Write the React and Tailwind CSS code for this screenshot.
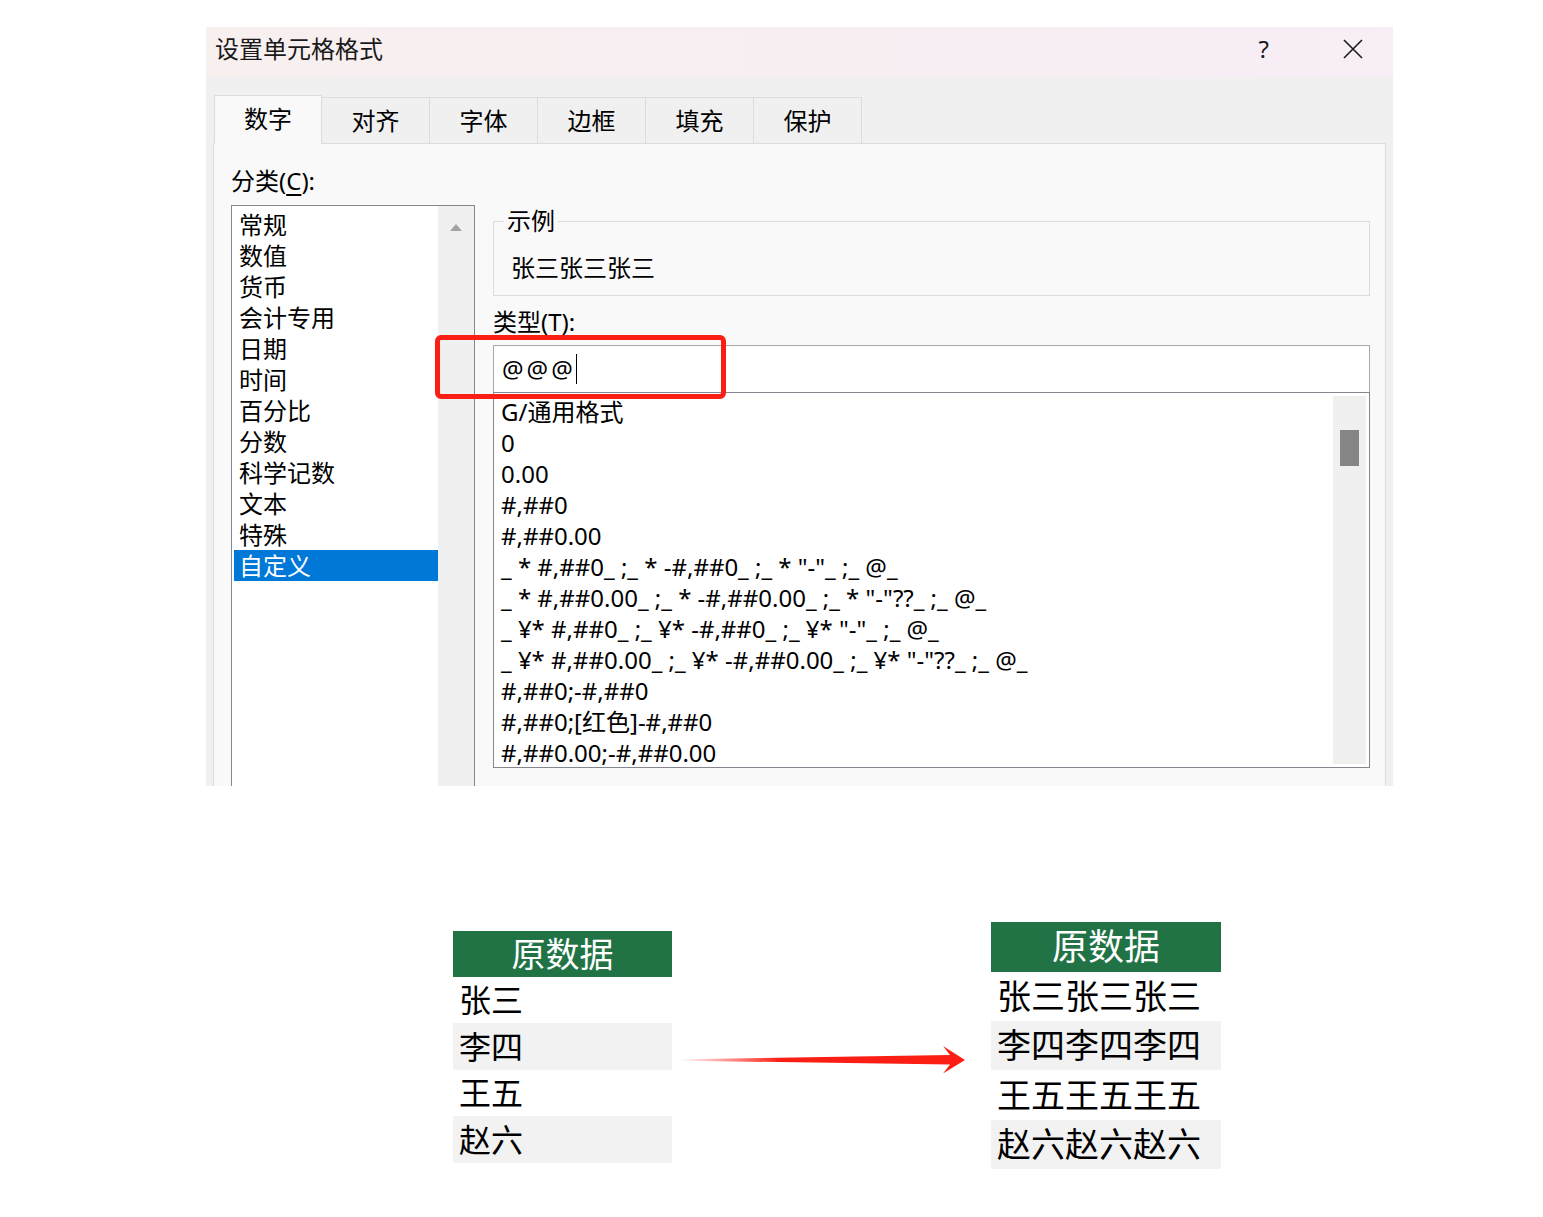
const FONT = { fontFamily: '"Noto Sans", "Noto Sans CJK SC", sans-serif' }

const tabs = ["数字", "对齐", "字体", "边框", "填充", "保护"]

const categories = ["常规", "数值", "货币", "会计专用", "日期", "时间", "百分比", "分数", "科学记数", "文本", "特殊", "自定义"]

const formats = [
  "G/通用格式",
  "0",
  "0.00",
  "#,##0",
  "#,##0.00",
  '_ * #,##0_ ;_ * -#,##0_ ;_ * "-"_ ;_ @_',
  '_ * #,##0.00_ ;_ * -#,##0.00_ ;_ * "-"??_ ;_ @_',
  '_ ¥* #,##0_ ;_ ¥* -#,##0_ ;_ ¥* "-"_ ;_ @_',
  '_ ¥* #,##0.00_ ;_ ¥* -#,##0.00_ ;_ ¥* "-"??_ ;_ @_',
  "#,##0;-#,##0",
  "#,##0;[红色]-#,##0",
  "#,##0.00;-#,##0.00",
]

const names = ["张三", "李四", "王五", "赵六"]

function TitleBar() {
  return (
    <div className="h-[50px] shrink-0 flex items-center pl-[9px] pr-[30px] pb-[6px] bg-gradient-to-r from-[#f8efef] to-[#f7eef6] text-[#1a1a1a]">
      <span className="text-[24px] leading-[30px]">设置单元格格式</span>
      <span className="ml-auto text-[24px] leading-[30px]">?</span>
      <svg className="ml-[74px]" width="20" height="20" viewBox="0 0 20 20">
        <path d="M1 1L19 19M19 1L1 19" stroke="#1a1a1a" strokeWidth="1.6" />
      </svg>
    </div>
  )
}

function Tabs() {
  return (
    <div className="h-[66px] shrink-0 pl-[8px] flex items-end relative z-10">
      {tabs.map((t, i) =>
        i === 0 ? (
          <div key={t} className="w-[108px] h-[49px] -mb-px pb-[2px] bg-[#f9f9f9] border border-b-0 border-[#dcdcdc] flex items-center justify-center text-[24px]">
            {t}
          </div>
        ) : (
          <div key={t} className="w-[108px] h-[46px] bg-[#f0f0f0] border border-l-0 border-b-0 border-[#dcdcdc] flex items-center justify-center text-[24px]">
            {t}
          </div>
        )
      )}
    </div>
  )
}

function CategoryList() {
  return (
    <div className="w-[244px]">
      <div className="h-[61px] flex items-center text-[24px] pt-[13px]">
        分类(<span className="underline underline-offset-4">C</span>):
      </div>
      <div className="h-[600px] border border-[#828790] flex bg-white">
        <div className="flex-1 pl-[2px] pt-[3px]">
          {categories.map((c, i) => (
            <div
              key={c}
              className={
                "h-[31px] leading-[31px] pl-[5px] text-[24px] " +
                (i === categories.length - 1 ? "bg-[#0078d7] text-white" : "text-black")
              }
            >
              {c}
            </div>
          ))}
        </div>
        <div className="w-[36px] bg-[#f0f0f0] flex justify-center pt-[18px]">
          <svg width="12" height="7" viewBox="0 0 12 7">
            <path d="M6 0L12 7H0Z" fill="#a3a3a3" />
          </svg>
        </div>
      </div>
    </div>
  )
}

function TypePane() {
  return (
    <div className="flex-1 ml-[18px] mr-[15px] pt-[63px]">
      <fieldset className="h-[89px] border border-[#dcdcdc] px-[17px]">
        <legend className="ml-[-7px] px-[3px] text-[24px] leading-[28px]">示例</legend>
        <div className="mt-[17px] text-[24px] leading-[32px]">张三张三张三</div>
      </fieldset>
      <div className="mt-[10px] mb-[1px] text-[24px] leading-[32px]">
        类型(<span className="underline underline-offset-4">T</span>):
      </div>
      <div className="mt-[7px] h-[47px] border border-b-0 border-[#a9a9a9] bg-white flex items-center pl-[8px] text-[24px]">
        <span className="tracking-[3px]">@@@</span>
        <span className="w-px h-[30px] bg-black" />
      </div>
      <div className="h-[376px] border border-[#828790] bg-white flex p-[3px]">
        <div className="flex-1 pl-[4px] whitespace-pre text-[24px]">
          {formats.map((f) => (
            <div key={f} className="h-[31px] leading-[31px]">
              {f}
            </div>
          ))}
        </div>
        <div className="w-[33px] bg-[#f0f0f0] flex justify-center pt-[34px]">
          <div className="w-[19px] h-[36px] bg-[#858585]" />
        </div>
      </div>
    </div>
  )
}

function Arrow() {
  return (
    <svg width="286" height="30" viewBox="0 0 286 30">
      <defs>
        <linearGradient id="shaft" x1="0" x2="1" y1="0" y2="0">
          <stop offset="0" stopColor="#fb1e14" stopOpacity="0" />
          <stop offset="0.35" stopColor="#fb1e14" stopOpacity="1" />
          <stop offset="1" stopColor="#fb1e14" stopOpacity="1" />
        </linearGradient>
      </defs>
      <path
        d="M0 14.3L270 10L263 1L285 15L263 28.5L270 19.5L0 15.7Z"
        fill="url(#shaft)"
      />
    </svg>
  )
}

function DataTable({ repeat, wide }) {
  const rowH = wide ? ["h-[49px]", "h-[49px]", "h-[50px]", "h-[49px]"] : ["h-[46px]", "h-[47px]", "h-[46px]", "h-[47px]"]
  return (
    <div className={wide ? "w-[230px]" : "w-[219px] mt-[9px]"}>
      <div
        className={
          "bg-[#217346] text-white flex items-center justify-center " +
          (wide ? "h-[50px] text-[36px]" : "h-[46px] text-[34px]")
        }
      >
        原数据
      </div>
      {names.map((n, i) => (
        <div
          key={n}
          className={
            rowH[i] +
            " flex items-center pl-[6px] text-black " +
            (wide ? "text-[34px] " : "text-[32px] ") +
            (i % 2 === 1 ? "bg-[#f2f2f2]" : "bg-white")
          }
        >
          {n.repeat(repeat)}
        </div>
      ))}
    </div>
  )
}

export default function App() {
  return (
    <div className="w-[1543px] h-[1217px] bg-white text-black overflow-hidden" style={FONT}>
      <div className="pt-[27px] pl-[206px]">
        <div className="w-[1187px] h-[759px] bg-[#f0f0f0] flex flex-col overflow-hidden">
          <TitleBar />
          <Tabs />
          <div className="relative mx-[7px] flex-1 min-h-0 bg-[#f9f9f9] border border-b-0 border-[#dcdcdc] flex pl-[17px]">
            <CategoryList />
            <TypePane />
            {/* 标注框 */}
            <div className="absolute left-[221px] top-[191px] w-[291px] h-[64px] border-[5px] border-[#fb1e14] rounded-[6px]" />
          </div>
        </div>
      </div>

      <div className="mt-[136px] pl-[453px] flex items-start">
        <DataTable repeat={1} />
        <div className="ml-[8px] mt-[123px]">
          <Arrow />
        </div>
        <div className="ml-[25px]">
          <DataTable repeat={3} wide />
        </div>
      </div>
    </div>
  )
}
